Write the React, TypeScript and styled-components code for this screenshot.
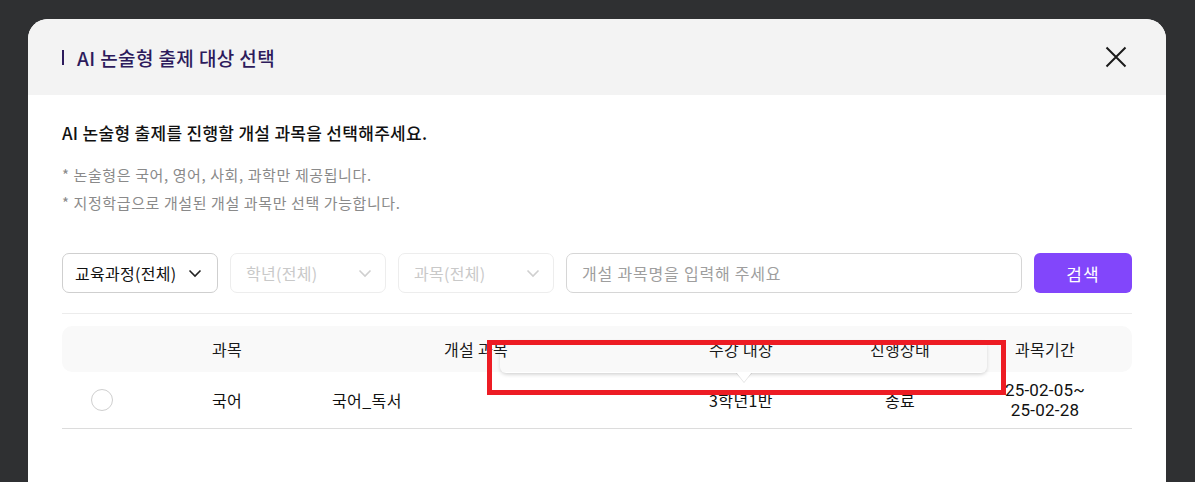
import React from "react"
import styled, { createGlobalStyle } from "styled-components"

const GlobalStyle = createGlobalStyle`
  html, body {
    margin: 0;
    padding: 0;
    background: #2f3032;
    overflow: hidden;
  }
  body {
    font-family: "Noto Sans CJK KR", "Noto Sans", sans-serif;
  }
`

const Modal = styled.div`
  margin: 19px 0 0 28px;
  width: 1138px;
  height: 463px;
  background: #fff;
  border-radius: 20px 20px 0 0;
  overflow: hidden;
  position: relative;
`

const Header = styled.div`
  height: 76px;
  background: #f3f3f3;
  display: flex;
  align-items: center;
  justify-content: space-between;
  padding: 0 38px 0 34px;
`

const Title = styled.h2`
  margin: 0;
  display: flex;
  align-items: center;
  gap: 13px;
  font-size: 19px;
  font-weight: 500;
  color: #2d1b5c;
  letter-spacing: 0.4px;
`

const TitleBar = styled.span`
  width: 2px;
  height: 15px;
  background: #2d1b5c;
`

const CloseButton = styled.button`
  border: 0;
  background: none;
  padding: 0;
  width: 24px;
  height: 24px;
  display: flex;
  align-items: center;
  justify-content: center;
`

const Body = styled.div`
  padding: 26px 34px 0;
`

const Lead = styled.p`
  margin: 0;
  font-size: 17px;
  line-height: 24px;
  font-weight: 500;
  color: #111;
  letter-spacing: 0.3px;
`

const Notes = styled.ul`
  margin: 16px 0 0;
  padding: 0;
  list-style: none;
  font-size: 15px;
  line-height: 28px;
  color: #8a8a8a;
  letter-spacing: 0.6px;
`

const Filters = styled.div`
  margin-top: 36px;
  display: flex;
  gap: 12px;
  height: 40px;
`

const Select = styled.div<{ $disabled?: boolean }>`
  width: 156px;
  box-sizing: border-box;
  border: 1px solid ${(p) => (p.$disabled ? "#ededed" : "#cfcfcf")};
  border-radius: 7px;
  display: flex;
  align-items: center;
  justify-content: ${(p) => (p.$disabled ? "space-between" : "flex-start")};
  gap: 10px;
  padding: 0 12px 0 ${(p) => (p.$disabled ? "15px" : "12px")};
  font-size: 16px;
  letter-spacing: 0.3px;
  color: ${(p) => (p.$disabled ? "#c9c9c9" : "#111")};
`

const SearchInput = styled.div`
  flex: 1;
  box-sizing: border-box;
  border: 1px solid #d6d6d6;
  border-radius: 7px;
  display: flex;
  align-items: center;
  padding: 0 15px;
  font-size: 16px;
  letter-spacing: 0.8px;
  color: #9e9e9e;
`

const SearchButton = styled.button`
  width: 98px;
  border: 0;
  border-radius: 6px;
  background: #8246fb;
  color: #fff;
  font-family: inherit;
  font-size: 17px;
  letter-spacing: 1px;
`

const Divider = styled.div`
  margin-top: 20px;
  height: 1px;
  background: #ececec;
`

const Table = styled.div`
  margin-top: 12px;
  position: relative;
`

const Cols = "80px 170px 328px 202px 116px 174px"

const HeadRow = styled.div`
  display: grid;
  grid-template-columns: ${Cols};
  height: 46px;
  align-items: center;
  background: #f9f9f9;
  border-radius: 10px;
  font-size: 16px;
  letter-spacing: 0.3px;
  color: #1a1a1a;
`

const Row = styled.div`
  display: grid;
  grid-template-columns: ${Cols};
  height: 56px;
  align-items: center;
  border-bottom: 1px solid #dcdcdc;
  font-size: 16px;
  letter-spacing: 0.4px;
  color: #111;
`

const Cell = styled.div<{ $left?: boolean }>`
  text-align: ${(p) => (p.$left ? "left" : "center")};
  padding-left: ${(p) => (p.$left ? "20px" : "0")};
  line-height: 20px;
`

const HeadCell = styled(Cell)`
  text-align: center;
  padding-left: 0;
`

const DateCell = styled(Cell)`
  font-family: Roboto, "Liberation Sans", sans-serif;
  font-size: 17px;
  line-height: 20px;
  letter-spacing: 0.2px;
`

const Radio = styled.span`
  display: block;
  margin: 0 auto;
  width: 22px;
  height: 22px;
  box-sizing: border-box;
  border: 1px solid #cfcfcf;
  border-radius: 50%;
`

const Tooltip = styled.div`
  position: absolute;
  left: 438px;
  top: 14px;
  width: 487px;
  height: 33px;
  border-radius: 6px;
  box-shadow: 0 2px 4px -1px rgba(0, 0, 0, 0.22);
  pointer-events: none;
`

const Caret = styled.div`
  position: absolute;
  left: 236px;
  bottom: -9px;
  width: 0;
  height: 0;
  border-left: 8px solid transparent;
  border-right: 8px solid transparent;
  border-top: 10px solid #fff;
  filter: drop-shadow(0 1px 0.5px rgba(0, 0, 0, 0.12));
`

const Highlight = styled.div`
  position: absolute;
  left: 459px;
  top: 321px;
  width: 519px;
  height: 55px;
  box-sizing: border-box;
  border: 5px solid #ed1c24;
  pointer-events: none;
`

const Chevron: React.FC<{ color: string }> = ({ color }) => (
  <svg width="16" height="16" viewBox="0 0 16 16" fill="none">
    <path d="M2.5 5.5 8 11l5.5-5.5" stroke={color} strokeWidth="1.6" />
  </svg>
)

export default function App() {
  return (
    <>
      <GlobalStyle />
      <Modal>
        <Header>
          <Title>
            <TitleBar />
            AI 논술형 출제 대상 선택
          </Title>
          <CloseButton>
            <svg width="22" height="22" viewBox="0 0 22 22" fill="none">
              <path d="M1.5 1.5l19 19M20.5 1.5l-19 19" stroke="#1a1a1a" strokeWidth="2" />
            </svg>
          </CloseButton>
        </Header>
        <Body>
          <Lead>AI 논술형 출제를 진행할 개설 과목을 선택해주세요.</Lead>
          <Notes>
            <li>* 논술형은 국어, 영어, 사회, 과학만 제공됩니다.</li>
            <li>* 지정학급으로 개설된 개설 과목만 선택 가능합니다.</li>
          </Notes>
          <Filters>
            <Select>
              교육과정(전체)
              <Chevron color="#222" />
            </Select>
            <Select $disabled>
              학년(전체)
              <Chevron color="#cfcfcf" />
            </Select>
            <Select $disabled>
              과목(전체)
              <Chevron color="#cfcfcf" />
            </Select>
            <SearchInput>개설 과목명을 입력해 주세요</SearchInput>
            <SearchButton>검색</SearchButton>
          </Filters>
          <Divider />
          <Table>
            <HeadRow>
              <HeadCell />
              <HeadCell>과목</HeadCell>
              <HeadCell>개설 과목</HeadCell>
              <HeadCell>수강 대상</HeadCell>
              <HeadCell>진행상태</HeadCell>
              <HeadCell>과목기간</HeadCell>
            </HeadRow>
            <Row>
              <Cell>
                <Radio />
              </Cell>
              <Cell>국어</Cell>
              <Cell $left>국어_독서</Cell>
              <Cell>3학년1반</Cell>
              <Cell>종료</Cell>
              <DateCell>
                25-02-05~
                <br />
                25-02-28
              </DateCell>
            </Row>
            <Tooltip>
              <Caret />
            </Tooltip>
          </Table>
        </Body>
        <Highlight />
      </Modal>
    </>
  )
}
